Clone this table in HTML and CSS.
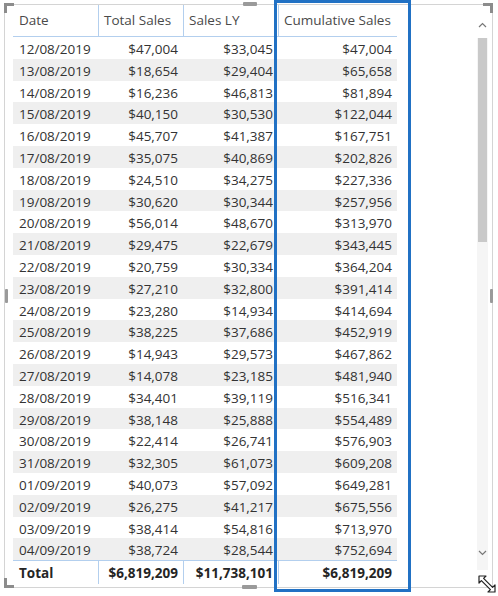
FILE: index.html
```html
<!DOCTYPE html>
<html>
<head>
<meta charset="utf-8">
<link rel="stylesheet" href="styles.css">
</head>
<body>
<div class="visual">
  <div class="frame">
    <div class="table">
      <div class="row head">
        <div class="cell">Date</div>
        <div class="cell sep">Total Sales</div>
        <div class="cell sep">Sales LY</div>
        <div class="cell sep">Cumulative Sales</div>
      </div>
      <div class="row"><div class="cell">12/08/2019</div><div class="cell num">$47,004</div><div class="cell num">$33,045</div><div class="cell num">$47,004</div></div>
      <div class="row alt"><div class="cell">13/08/2019</div><div class="cell num">$18,654</div><div class="cell num">$29,404</div><div class="cell num">$65,658</div></div>
      <div class="row"><div class="cell">14/08/2019</div><div class="cell num">$16,236</div><div class="cell num">$46,813</div><div class="cell num">$81,894</div></div>
      <div class="row alt"><div class="cell">15/08/2019</div><div class="cell num">$40,150</div><div class="cell num">$30,530</div><div class="cell num">$122,044</div></div>
      <div class="row"><div class="cell">16/08/2019</div><div class="cell num">$45,707</div><div class="cell num">$41,387</div><div class="cell num">$167,751</div></div>
      <div class="row alt"><div class="cell">17/08/2019</div><div class="cell num">$35,075</div><div class="cell num">$40,869</div><div class="cell num">$202,826</div></div>
      <div class="row"><div class="cell">18/08/2019</div><div class="cell num">$24,510</div><div class="cell num">$34,275</div><div class="cell num">$227,336</div></div>
      <div class="row alt"><div class="cell">19/08/2019</div><div class="cell num">$30,620</div><div class="cell num">$30,344</div><div class="cell num">$257,956</div></div>
      <div class="row"><div class="cell">20/08/2019</div><div class="cell num">$56,014</div><div class="cell num">$48,670</div><div class="cell num">$313,970</div></div>
      <div class="row alt"><div class="cell">21/08/2019</div><div class="cell num">$29,475</div><div class="cell num">$22,679</div><div class="cell num">$343,445</div></div>
      <div class="row"><div class="cell">22/08/2019</div><div class="cell num">$20,759</div><div class="cell num">$30,334</div><div class="cell num">$364,204</div></div>
      <div class="row alt"><div class="cell">23/08/2019</div><div class="cell num">$27,210</div><div class="cell num">$32,800</div><div class="cell num">$391,414</div></div>
      <div class="row"><div class="cell">24/08/2019</div><div class="cell num">$23,280</div><div class="cell num">$14,934</div><div class="cell num">$414,694</div></div>
      <div class="row alt"><div class="cell">25/08/2019</div><div class="cell num">$38,225</div><div class="cell num">$37,686</div><div class="cell num">$452,919</div></div>
      <div class="row"><div class="cell">26/08/2019</div><div class="cell num">$14,943</div><div class="cell num">$29,573</div><div class="cell num">$467,862</div></div>
      <div class="row alt"><div class="cell">27/08/2019</div><div class="cell num">$14,078</div><div class="cell num">$23,185</div><div class="cell num">$481,940</div></div>
      <div class="row"><div class="cell">28/08/2019</div><div class="cell num">$34,401</div><div class="cell num">$39,119</div><div class="cell num">$516,341</div></div>
      <div class="row alt"><div class="cell">29/08/2019</div><div class="cell num">$38,148</div><div class="cell num">$25,888</div><div class="cell num">$554,489</div></div>
      <div class="row"><div class="cell">30/08/2019</div><div class="cell num">$22,414</div><div class="cell num">$26,741</div><div class="cell num">$576,903</div></div>
      <div class="row alt"><div class="cell">31/08/2019</div><div class="cell num">$32,305</div><div class="cell num">$61,073</div><div class="cell num">$609,208</div></div>
      <div class="row"><div class="cell">01/09/2019</div><div class="cell num">$40,073</div><div class="cell num">$57,092</div><div class="cell num">$649,281</div></div>
      <div class="row alt"><div class="cell">02/09/2019</div><div class="cell num">$26,275</div><div class="cell num">$41,217</div><div class="cell num">$675,556</div></div>
      <div class="row"><div class="cell">03/09/2019</div><div class="cell num">$38,414</div><div class="cell num">$54,816</div><div class="cell num">$713,970</div></div>
      <div class="row alt"><div class="cell">04/09/2019</div><div class="cell num">$38,724</div><div class="cell num">$28,544</div><div class="cell num">$752,694</div></div>
      <div class="row total">
        <div class="cell">Total</div>
        <div class="cell num sep">$6,819,209</div>
        <div class="cell num sep">$11,738,101</div>
        <div class="cell num sep">$6,819,209</div>
      </div>
    </div>
    <div class="scrollbar">
      <div class="sb-btn">
        <svg width="9" height="6" viewBox="0 0 9 6"><path d="M1 5 L4.5 1.5 L8 5" fill="none" stroke="#777" stroke-width="1.2"/></svg>
      </div>
      <div class="sb-track"><div class="sb-thumb"></div></div>
      <div class="sb-btn down">
        <svg width="9" height="6" viewBox="0 0 9 6"><path d="M1 1 L4.5 4.5 L8 1" fill="none" stroke="#777" stroke-width="1.2"/></svg>
      </div>
    </div>
  </div>

  <div class="corner tl"></div>
  <div class="corner tr"></div>
  <div class="corner bl"></div>
  <div class="handle h-top"></div>
  <div class="handle h-bottom"></div>
  <div class="handle h-left"></div>
  <div class="handle h-right"></div>
  <div class="highlight"></div>
  <svg class="resize" width="20" height="22" viewBox="0 0 20 22">
    <path d="M1 2 L8 2 L5.6 4.4 L14.6 13.4 L17 11 L17 18 L10 18 L12.4 15.6 L3.4 6.6 L1 9 Z" fill="#fff" stroke="#222" stroke-width="1.2" stroke-linejoin="round"/>
  </svg>
</div>
</body>
</html>
```

FILE: styles.css
```css
html, body {
  margin: 0;
  padding: 0;
  background: #ffffff;
}

body {
  font-family: "Open Sans", "Noto Sans", "Liberation Sans", sans-serif;
  font-size: 13.5px;
  color: #333333;
}

.visual {
  position: relative;
  width: 498px;
  height: 596px;
}

.frame {
  position: relative;
  top: 4px;
  left: 4px;
  width: 489px;
  height: 584px;
  box-sizing: border-box;
  border: 1px solid #d4d4d4;
  display: flex;
  align-items: flex-start;
}

.table {
  margin-left: 8px;
  width: 384px;
  display: flex;
  flex-direction: column;
}

.row {
  display: grid;
  grid-template-columns: 85px 85px 95px 119px;
  height: 21.8px;
}

.row.alt {
  background: #efefef;
}

.cell {
  box-sizing: border-box;
  padding: 3px 5px 0 6px;
  line-height: 18.8px;
  white-space: nowrap;
  overflow: hidden;
}

.cell.num {
  text-align: right;
  padding-left: 2px;
}

.row.head {
  height: 32px;
  box-sizing: border-box;
  border-bottom: 1px solid #b3cfee;
  color: #4a4a4a;
}

.row.head .cell {
  padding: 0 4px 0 6px;
  line-height: 31px;
}

.cell.sep {
  border-left: 1px solid #b3cfee;
}

.row.head .cell.sep {
  padding-left: 5px;
}

.row.total {
  height: 24px;
  box-sizing: border-box;
  border-top: 1px solid #b3cfee;
  font-weight: 700;
  color: #252525;
}

.row.total .cell {
  padding-top: 1px;
  line-height: 22px;
}

.scrollbar {
  margin-left: auto;
  margin-right: 4px;
  margin-top: 7px;
  width: 11px;
  height: 558px;
  display: flex;
  flex-direction: column;
  background: #f5f5f5;
}

.sb-btn {
  height: 26px;
  display: flex;
  align-items: center;
  justify-content: center;
  background: #ffffff;
}

.sb-btn.down {
  height: 20px;
  background: #f5f5f5;
  align-items: flex-start;
}

.sb-track {
  flex: 1;
  padding: 0 1px;
}

.sb-thumb {
  height: 204px;
  background: #c9c9c9;
}

.corner {
  position: absolute;
  width: 7px;
  height: 7px;
  border: 0 solid #8c8c8c;
}

.corner.tl {
  left: 4px;
  top: 3px;
  border-top-width: 3px;
  border-left-width: 3px;
}

.corner.tr {
  left: 483px;
  top: 3px;
  border-top-width: 3px;
  border-right-width: 3px;
}

.corner.bl {
  left: 4px;
  top: 578px;
  border-bottom-width: 3px;
  border-left-width: 3px;
}

.handle {
  position: absolute;
  background: #9a9a9a;
  border-radius: 1px;
}

.h-top {
  left: 243px;
  top: 2px;
  width: 14px;
  height: 4px;
}

.h-bottom {
  left: 242px;
  top: 585px;
  width: 15px;
  height: 4px;
}

.h-left {
  left: 5px;
  top: 289px;
  width: 3px;
  height: 14px;
}

.h-right {
  left: 490px;
  top: 289px;
  width: 3px;
  height: 14px;
}

.highlight {
  position: absolute;
  left: 274px;
  top: 0;
  width: 137px;
  height: 592px;
  box-sizing: border-box;
  border: 3px solid #2171c4;
}

.resize {
  position: absolute;
  left: 478px;
  top: 574px;
}
```
